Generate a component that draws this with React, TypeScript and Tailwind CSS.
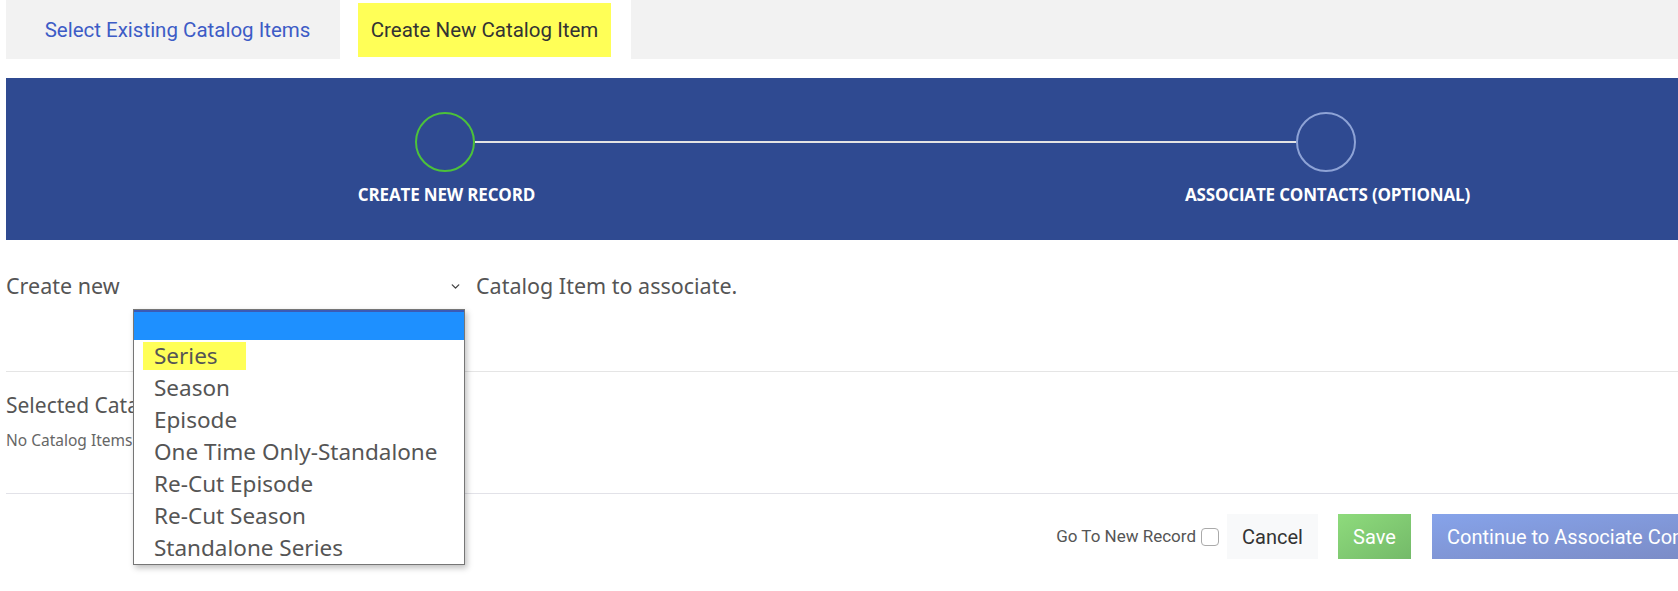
import { ChevronDown } from "lucide-react";

const opciones = [
  "Season",
  "Episode",
  "One Time Only-Standalone",
  "Re-Cut Episode",
  "Re-Cut Season",
  "Standalone Series",
];

function Stepper() {
  return (
    <div className="bg-[#2f4a91] h-[162px] pt-[34px]">
      {/* circulos con la linea entre ellos */}
      <div className="flex items-center ml-[409px] mr-[412px]">
        <div className="w-[60px] h-[60px] rounded-full border-2 border-[#4cc23a]" />
        <div className="flex-1 h-[2px] bg-[#e4e4e4]" />
        <div className="w-[60px] h-[60px] rounded-full border-2 border-[#8ea3d6]" />
      </div>
      <div className="grid grid-cols-2 mt-[12px] font-['Open_Sans',sans-serif] font-bold text-[17px] leading-[22px] text-white tracking-[-0.01em]">
        <div className="text-center">CREATE NEW RECORD</div>
        <div className="text-center">ASSOCIATE CONTACTS (OPTIONAL)</div>
      </div>
    </div>
  );
}

export default function App() {
  return (
    <div className="w-[1678px] h-[591px] overflow-hidden bg-white">
      <div className="w-[1762px] ml-[6px]">
        {/* tabs */}
        <div className="flex h-[59px] bg-[#f2f2f2] font-['Roboto',sans-serif] text-[20.5px]">
          <div className="w-[334px] flex items-center justify-center pt-[1px] pl-[9px] text-[#3d5cc6]">
            Select Existing Catalog Items
          </div>
          <div className="w-[291px] bg-white pt-[3px] pb-[2px] pl-[18px]">
            <div className="w-[253px] h-full bg-[#ffff57] flex items-center justify-center text-[#333]">
              Create New Catalog Item
            </div>
          </div>
        </div>

        <div className="mt-[19px]">
          <Stepper />
        </div>

        {/* fila del select */}
        <div className="flex items-center h-[30px] mt-[31px] font-['Noto_Sans',sans-serif] text-[21.5px] text-[#555]">
          <span className="w-[127px]">Create new</span>
          <div className="relative w-[332px] h-[30px] flex items-center justify-end pr-[3px]">
            <ChevronDown size={13} strokeWidth={2.5} className="text-[#444]" />
            <div className="absolute left-0 top-[38px] w-[332px] bg-white border border-[#767676] shadow-[2px_3px_6px_rgba(0,0,0,0.25)] z-10 text-[22.5px]">
              <div className="h-[30px] bg-[#1e90ff] border-t-2 border-[#3b5bb5]" />
              <div className="h-[32px] flex items-center pl-[9px]">
                <span className="w-[103px] h-[28px] bg-[#ffff57] pl-[11px] flex items-center">Series</span>
              </div>
              {opciones.map((op) => (
                <div key={op} className="h-[32px] flex items-center pl-[20px]">
                  {op}
                </div>
              ))}
            </div>
          </div>
          <span className="ml-[11px]">Catalog Item to associate.</span>
        </div>

        <div className="h-px bg-[#e5e5e5] mt-[70px]" />

        <div className="mt-[18px] font-['Noto_Sans',sans-serif] text-[21px] leading-[30px] text-[#555]">
          Selected Catalog Items
        </div>
        <div className="mt-[10px] font-['Noto_Sans',sans-serif] text-[15.5px] leading-[20px] text-[#666]">
          No Catalog Items Selected
        </div>

        <div className="h-px bg-[#e2e2e8] mt-[43px]" />

        {/* botones */}
        <div className="flex justify-end items-center mt-[20px] font-['Roboto',sans-serif]">
          <span className="text-[17px] text-[#555] mr-[5px]">Go To New Record</span>
          <input type="checkbox" className="w-[18px] h-[18px] rounded border border-[#aaa] appearance-none bg-white mr-[8px]" />
          <button className="w-[91px] h-[45px] bg-[#f8f9fa] text-[20px] text-[#333]">Cancel</button>
          <button className="w-[73px] h-[45px] ml-[20px] bg-gradient-to-br from-[#8edb7c] to-[#74ba69] text-[20px] text-white">
            Save
          </button>
          <button className="w-[336px] h-[45px] ml-[21px] bg-gradient-to-br from-[#86a3ea] to-[#7a89c2] text-[20px] text-white text-left pl-[15px]">
            Continue to Associate Contacts
          </button>
        </div>
      </div>
    </div>
  );
}
